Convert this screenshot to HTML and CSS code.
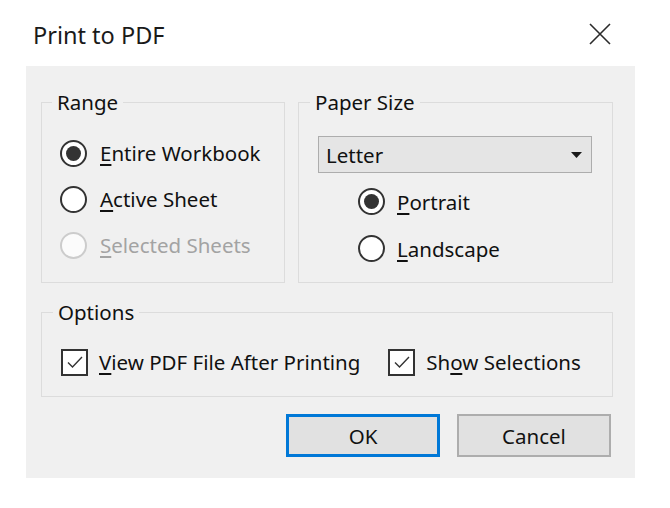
FILE: index.html
```html
<!DOCTYPE html>
<html>
<head>
<meta charset="utf-8">
<link rel="stylesheet" href="styles.css">
</head>
<body>
<div class="dialog">
  <div class="titlebar">
    <span class="title">Print to PDF</span>
    <svg class="close" width="22" height="22" viewBox="0 0 22 22"><path d="M1 1L21 21M21 1L1 21" stroke="#2b2b2b" stroke-width="1.6" fill="none"/></svg>
  </div>
  <div class="panel">
    <div class="toprow">
      <fieldset class="group range">
        <legend>Range</legend>
        <div class="opt"><span class="radio checked"></span><span class="lbl"><u>E</u>ntire Workbook</span></div>
        <div class="opt"><span class="radio"></span><span class="lbl"><u>A</u>ctive Sheet</span></div>
        <div class="opt disabled"><span class="radio"></span><span class="lbl"><u>S</u>elected Sheets</span></div>
      </fieldset>
      <fieldset class="group paper">
        <legend>Paper Size</legend>
        <div class="select"><span class="lbl">Letter</span><svg class="arrow" width="11" height="6" viewBox="0 0 11 6"><path d="M0 0H11L5.5 6Z" fill="#1a1a1a"/></svg></div>
        <div class="orient">
          <div class="opt"><span class="radio checked"></span><span class="lbl"><u>P</u>ortrait</span></div>
          <div class="opt"><span class="radio"></span><span class="lbl"><u>L</u>andscape</span></div>
        </div>
      </fieldset>
    </div>
    <fieldset class="group options">
      <legend>Options</legend>
      <div class="checks">
        <div class="chk"><span class="box"><svg width="18" height="14" viewBox="0 0 18 14"><path d="M2 7.5L6.5 12L16 2" stroke="#333" stroke-width="1.4" fill="none"/></svg></span><span class="lbl"><u>V</u>iew PDF File After Printing</span></div>
        <div class="chk"><span class="box"><svg width="18" height="14" viewBox="0 0 18 14"><path d="M2 7.5L6.5 12L16 2" stroke="#333" stroke-width="1.4" fill="none"/></svg></span><span class="lbl">Sh<u>o</u>w Selections</span></div>
      </div>
    </fieldset>
    <div class="buttons">
      <button class="btn primary">OK</button>
      <button class="btn">Cancel</button>
    </div>
  </div>
</div>
</body>
</html>
```
FILE: styles.css
```css
* { box-sizing: border-box; }
html, body {
  margin: 0;
  padding: 0;
  background: #ffffff;
}
body {
  width: 670px;
  height: 508px;
  font-family: "Noto Sans", "Open Sans", sans-serif;
  font-size: 20.5px;
  color: #111;
}
.titlebar {
  height: 66px;
  display: flex;
  align-items: center;
  justify-content: space-between;
  padding: 0 59px 0 33px;
}
.title {
  font-size: 23.5px;
  color: #1a1a1a;
  line-height: 24px;
  padding-top: 3px;
}
.close {
  display: block;
  margin-top: 1px;
}
.panel {
  margin-left: 26px;
  width: 609px;
  height: 412px;
  background: #f0f0f0;
  padding: 24px 22px 0 15px;
}
.toprow {
  display: flex;
  gap: 13px;
}
.group {
  margin: 0;
  border: 1px solid #dcdcdc;
  min-width: 0;
}
.group legend {
  line-height: 24px;
  padding: 0 5px;
  margin-left: -8px;
  color: #111;
}
.range {
  width: 244px;
  padding: 16px 10px 14px 18px;
}
.paper {
  width: 315px;
  padding: 22px 20px 0 19px;
}
.opt {
  height: 46px;
  display: flex;
  align-items: center;
  gap: 13px;
}
.radio {
  width: 27px;
  height: 27px;
  border-radius: 50%;
  border: 2px solid #333;
  background: #fff;
  display: flex;
  align-items: center;
  justify-content: center;
  flex: none;
}
.radio.checked::after {
  content: "";
  width: 15px;
  height: 15px;
  border-radius: 50%;
  background: #333;
}
.disabled .radio {
  border-color: #cccccc;
  background: #fbfbfb;
}
.disabled .lbl {
  color: #a3a3a3;
}
.lbl u {
  text-underline-offset: 3px;
  text-decoration-thickness: 1.5px;
}
.select {
  height: 37px;
  background: #e5e5e5;
  border: 1px solid #adadad;
  display: flex;
  align-items: center;
  justify-content: space-between;
  padding: 0 9px 0 7px;
}
.orient {
  padding-left: 40px;
  margin-top: 5px;
}
.orient .opt {
  height: 47px;
  gap: 12px;
}
.options {
  margin-top: 17px;
  padding: 20px 10px 16px 19px;
}
.checks {
  height: 36px;
  display: flex;
  align-items: center;
  gap: 28px;
}
.chk {
  display: flex;
  align-items: center;
  gap: 11px;
}
.box {
  width: 27px;
  height: 27px;
  border: 2px solid #333;
  background: #fff;
  display: flex;
  align-items: center;
  justify-content: center;
  flex: none;
}
.buttons {
  display: flex;
  justify-content: flex-end;
  gap: 17px;
  margin-top: 17px;
  padding-right: 2px;
}
.btn {
  width: 154px;
  height: 43px;
  font-family: inherit;
  font-size: 20.5px;
  color: #111;
  background: #e1e1e1;
  border: 2px solid #adadad;
  padding: 0;
  margin: 0;
}
.btn.primary {
  border: 3px solid #0078d7;
}
```
